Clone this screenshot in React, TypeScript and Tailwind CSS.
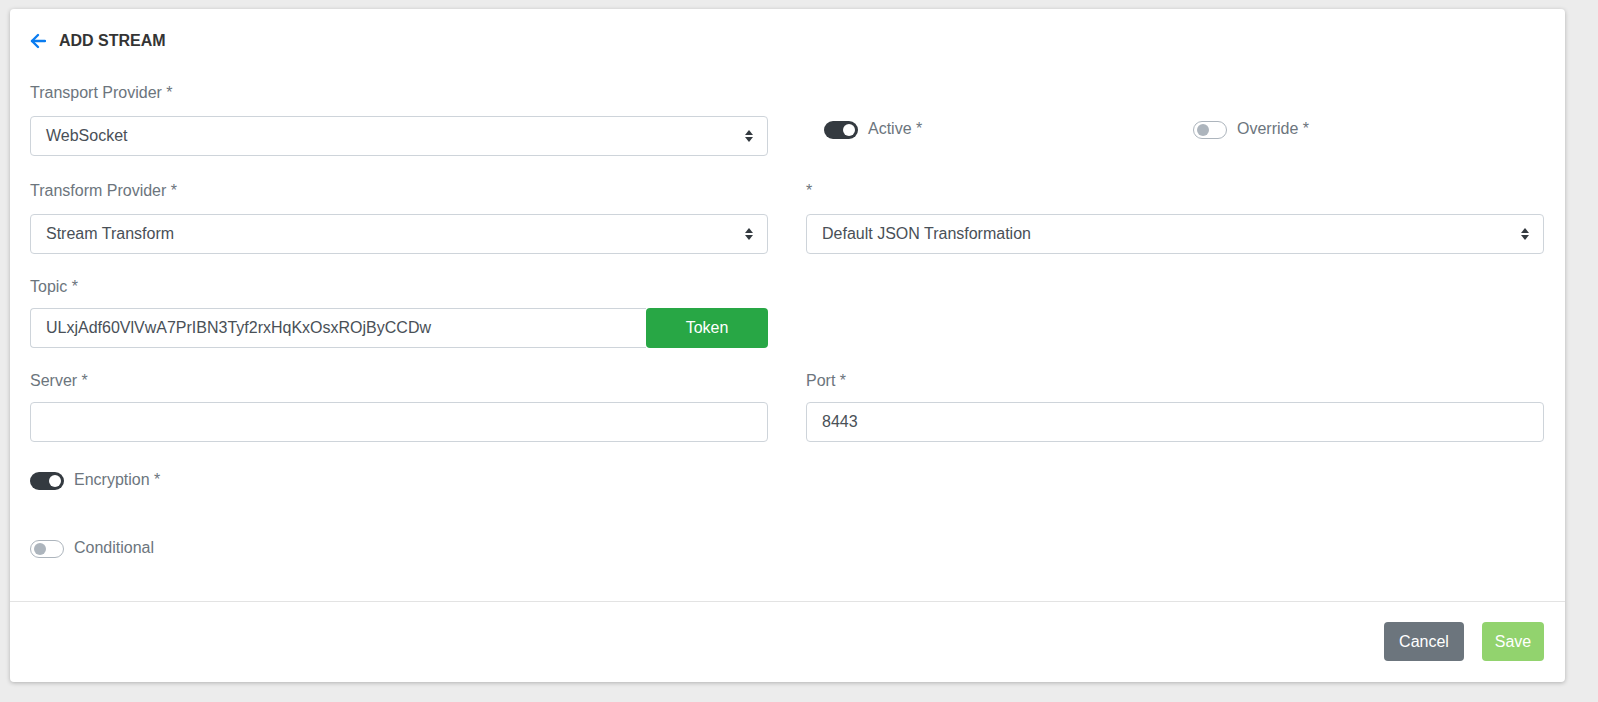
import type { ReactNode } from 'react';

function Switch({ on }: { on: boolean }) {
  return on ? (
    <span className="relative block w-[34px] h-[18px] rounded-full bg-[#343a40] shrink-0">
      <span className="absolute right-[3px] top-[3px] w-[12px] h-[12px] rounded-full bg-white" />
    </span>
  ) : (
    <span className="relative block w-[34px] h-[18px] rounded-full bg-white border border-[#adb5bd] shrink-0">
      <span className="absolute left-[3px] top-[2px] w-[12px] h-[12px] rounded-full bg-[#adb5bd]" />
    </span>
  );
}

function Toggle({ on, label }: { on: boolean; label: string }) {
  return (
    <div className="flex items-start gap-[10px] h-[22px]">
      <div className="flex pt-[3px]">
        <Switch on={on} />
      </div>
      <span className="text-[16px] leading-[22px] text-[#6c757d]">{label}</span>
    </div>
  );
}

function Label({ children }: { children: ReactNode }) {
  return <div className="text-[16px] leading-[22px] text-[#6c757d]">{children}</div>;
}

function Select({ value }: { value: string }) {
  return (
    <div className="flex items-center justify-between h-[40px] px-[15px] border border-[#ced4da] rounded-[4px] bg-white text-[16px] text-[#495057]">
      <span>{value}</span>
      <svg width="10" height="14" viewBox="0 0 10 14" className="mr-[-2px]">
        <path d="M5 1 L9 6 L1 6 Z" fill="#343a40" />
        <path d="M5 13 L9 8 L1 8 Z" fill="#343a40" />
      </svg>
    </div>
  );
}

function Input({ value = '' }: { value?: string }) {
  return (
    <div className="flex items-center h-[40px] px-[15px] border border-[#ced4da] rounded-[4px] bg-white text-[16px] text-[#495057]">
      {value}
    </div>
  );
}

export default function App() {
  return (
    <div
      className="h-[702px] overflow-hidden bg-[#ececec] pt-[9px] px-[10px]"
      style={{ fontFamily: '"Liberation Sans", Arial, sans-serif' }}
    >
      <div className="w-[1555px] bg-white rounded-[4px] shadow-[0_1px_4px_rgba(0,0,0,0.25)]">
        <div className="pl-[20px] pr-[21px] pt-[20px]">
          <div className="flex items-center h-[24px] gap-[13px]">
            <svg width="16" height="16" viewBox="0 0 16 16" fill="none" stroke="#0a7cf0" strokeWidth="2.4" strokeLinecap="round" strokeLinejoin="round">
              <path d="M15 8 H2" />
              <path d="M8 2 L2 8 L8 14" />
            </svg>
            <span className="text-[16px] font-bold text-[#343434]">ADD STREAM</span>
          </div>

          <div className="grid grid-cols-2 gap-x-[38px] mt-[29px]">
            <div>
              <Label>Transport Provider *</Label>
              <div className="mt-[12px]">
                <Select value="WebSocket" />
              </div>
            </div>
            <div className="grid grid-cols-2 pt-[36px]">
              <div className="pl-[18px]">
                <Toggle on label="Active *" />
              </div>
              <div className="pl-[18px]">
                <Toggle on={false} label="Override *" />
              </div>
            </div>
          </div>

          <div className="grid grid-cols-2 gap-x-[38px] mt-[24px]">
            <div>
              <Label>Transform Provider *</Label>
              <div className="mt-[12px]">
                <Select value="Stream Transform" />
              </div>
            </div>
            <div>
              <Label>*</Label>
              <div className="mt-[12px]">
                <Select value="Default JSON Transformation" />
              </div>
            </div>
          </div>

          <div className="grid grid-cols-2 gap-x-[38px] mt-[22px]">
            <div>
              <Label>Topic *</Label>
              <div className="mt-[10px] flex h-[40px]">
                <div className="flex-1 flex items-center px-[15px] border border-[#ced4da] border-r-0 rounded-l-[4px] text-[16px] text-[#495057]">
                  ULxjAdf60VlVwA7PrIBN3Tyf2rxHqKxOsxROjByCCDw
                </div>
                <button className="w-[122px] h-[40px] bg-[#28a745] text-white text-[16px] rounded-[4px] font-medium">
                  Token
                </button>
              </div>
            </div>
            <div />
          </div>

          <div className="grid grid-cols-2 gap-x-[38px] mt-[22px]">
            <div>
              <Label>Server *</Label>
              <div className="mt-[10px]">
                <Input />
              </div>
            </div>
            <div>
              <Label>Port *</Label>
              <div className="mt-[10px]">
                <Input value="8443" />
              </div>
            </div>
          </div>

          <div className="mt-[27px]">
            <Toggle on label="Encryption *" />
          </div>
          <div className="mt-[46px] pb-[42px]">
            <Toggle on={false} label="Conditional" />
          </div>
        </div>

        <div className="border-t border-[#e3e3e3] flex justify-end gap-[18px] pl-[20px] pr-[21px] pt-[20px] pb-[21px]">
          <button className="w-[80px] h-[39px] rounded-[4px] bg-[#6c757d] text-white text-[16px]">Cancel</button>
          <button className="w-[62px] h-[39px] rounded-[4px] bg-[#92d36e] text-white text-[16px]">Save</button>
        </div>
      </div>
    </div>
  );
}
